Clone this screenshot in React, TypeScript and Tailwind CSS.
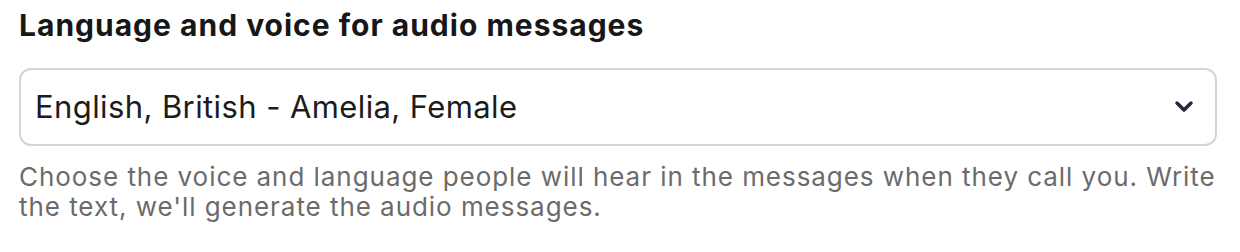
import React from 'react';

const App = () => {
  return (
    <div className="w-[1240px] h-[252px] bg-white px-[19px] pt-[7px] font-['Inter',sans-serif]">
      <h2 className="text-[30px] leading-[36px] font-bold tracking-[1px] text-[#171717]">
        Language and voice for audio messages
      </h2>
      <div className="mt-[25px] w-[1198px] h-[78px] rounded-[12px] border-2 border-[#d4d4d4] flex items-center justify-between pl-[14px] pr-[21px]">
        <span className="text-[31px] tracking-[0.4px] text-[#1c1c1c]">English, British - Amelia, Female</span>
        <svg width="20" height="14" viewBox="0 0 20 14" fill="none">
          <polyline
            points="3,3 10,10 17,3"
            stroke="#1e293b"
            strokeWidth="3.5"
            strokeLinecap="round"
            strokeLinejoin="round"
          />
        </svg>
      </div>
      <p className="mt-[16px] w-[1216px] text-[26px] leading-[30px] tracking-[0.95px] text-[#6b6b6b]">
        Choose the voice and language people will hear in the messages when they call you. Write the text, we'll generate the audio messages.
      </p>
    </div>
  );
};

export default App;
